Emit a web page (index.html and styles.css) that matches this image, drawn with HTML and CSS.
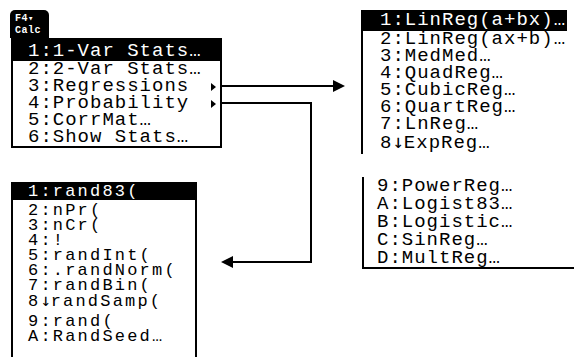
FILE: index.html
```html
<!DOCTYPE html>
<html lang="en">
<head>
  <meta charset="UTF-8">
  <title>Calc Menus</title>
  <link rel="stylesheet" href="styles.css">
</head>
<body>

  <div id="sheet">
    <div class="col col-left">
      <div class="f4-menu">
        <div class="tab">F4<span class="caret">▾</span><br>Calc</div>
        <ul class="box calc-box">
          <li class="sel">1:1-Var Stats…</li>
          <li>2:2-Var Stats…</li>
          <li class="sub">3:Regressions<i class="tri"></i></li>
          <li class="sub">4:Probability<i class="tri"></i></li>
          <li>5:CorrMat…</li>
          <li>6:Show Stats…</li>
        </ul>
      </div>

      <ul class="box prob-box">
        <li class="sel">1:rand83(</li>
        <li>2:nPr(</li>
        <li>3:nCr(</li>
        <li>4:!</li>
        <li>5:randInt(</li>
        <li>6:.randNorm(</li>
        <li>7:randBin(</li>
        <li>8<span class="dn">↓</span>randSamp(</li>
        <li class="page">9:rand(</li>
        <li>A:RandSeed…</li>
      </ul>
    </div>

    <div class="col col-right">
      <ul class="box reg-top">
        <li class="sel">1:LinReg(a+bx)…</li>
        <li>2:LinReg(ax+b)…</li>
        <li>3:MedMed…</li>
        <li>4:QuadReg…</li>
        <li>5:CubicReg…</li>
        <li>6:QuartReg…</li>
        <li>7:LnReg…</li>
        <li>8<span class="dn">↓</span>ExpReg…</li>
      </ul>

      <ul class="box reg-bottom">
        <li>9:PowerReg…</li>
        <li>A:Logist83…</li>
        <li>B:Logistic…</li>
        <li>C:SinReg…</li>
        <li>D:MultReg…</li>
      </ul>
    </div>

    <!-- connector arrows between the menus -->
    <svg class="wires" width="574" height="357" viewBox="0 0 574 357">
      <path d="M222 86 H334" />
      <polygon points="333,80 345,86 333,92" />
      <path d="M222 103 H311 V262 H232" />
      <polygon points="233,256 221,262 233,268" />
    </svg>
  </div>

</body>
</html>
```

FILE: styles.css
```css
body {
  margin: 0;
  background: #fff;
  color: #000;
  font-family: "Liberation Mono", "DejaVu Sans Mono", monospace;
}

#sheet {
  position: relative;
  display: flex;
  width: 574px;
  height: 357px;
  padding-top: 10px;
  box-sizing: border-box;
  overflow: hidden;
}

.col {
  display: flex;
  flex-direction: column;
}

.col-left {
  width: 361px;
  padding-left: 10px;
  box-sizing: border-box;
}

.col-right {
  flex: 1;
}

.box {
  list-style: none;
  margin: 0;
  padding: 0;
}

.box li {
  font-size: 19px;
  line-height: 17px;
  letter-spacing: 1px;
  white-space: pre;
}

.box li.sel {
  background: #000;
  color: #fff;
}

.dn {
  font-family: "DejaVu Sans Mono", monospace;
  letter-spacing: 0;
}

/* F4 Calc menu */
.tab {
  width: 39px;
  height: 28px;
  box-sizing: border-box;
  padding: 3px 0 0 5px;
  background: #000;
  color: #fff;
  border-radius: 5px 5px 0 0;
  font-size: 10px;
  font-weight: bold;
  line-height: 12px;
  letter-spacing: 0.5px;
}

.caret {
  font-size: 9px;
}

.calc-box {
  width: 207px;
  margin-left: 1px;
  border: 2px solid #000;
  border-top: 0;
}

.calc-box li {
  padding-left: 15px;
}

.calc-box li.sel {
  margin-left: -2px;
  padding: 5px 0 1px 17px;
}

.calc-box li.sub {
  display: flex;
  justify-content: space-between;
  align-items: center;
  padding-right: 4px;
}

.tri {
  width: 0;
  height: 0;
  border-left: 5px solid #000;
  border-top: 4px solid transparent;
  border-bottom: 4px solid transparent;
}

/* Probability submenu */
.prob-box {
  flex: 1;
  width: 182px;
  margin: 34px 0 0 1px;
  border-left: 2px solid #000;
  border-right: 2px solid #000;
}

.prob-box li {
  font-size: 17px;
  line-height: 15px;
  letter-spacing: 2.2px;
  padding-left: 15px;
}

.prob-box li.sel {
  padding-top: 2px;
  padding-bottom: 1px;
  margin-bottom: 3px;
}

.prob-box li.page {
  margin-top: 5px;
}

/* Regressions submenu */
.reg-top {
  width: 204px;
  padding-bottom: 2px;
  border-left: 2px solid #000;
}

.reg-top li {
  padding-left: 17px;
}

.reg-top li.sel {
  padding-top: 2px;
  padding-bottom: 2px;
}

.reg-bottom {
  margin-top: 23px;
  margin-left: 1px;
  border-left: 2px solid #000;
  border-bottom: 2px solid #000;
}

.reg-bottom li {
  line-height: 18px;
  padding-left: 13px;
}

.wires {
  position: absolute;
  left: 0;
  top: 0;
  pointer-events: none;
}

.wires path {
  fill: none;
  stroke: #000;
  stroke-width: 2;
}

.wires polygon {
  fill: #000;
}
```
